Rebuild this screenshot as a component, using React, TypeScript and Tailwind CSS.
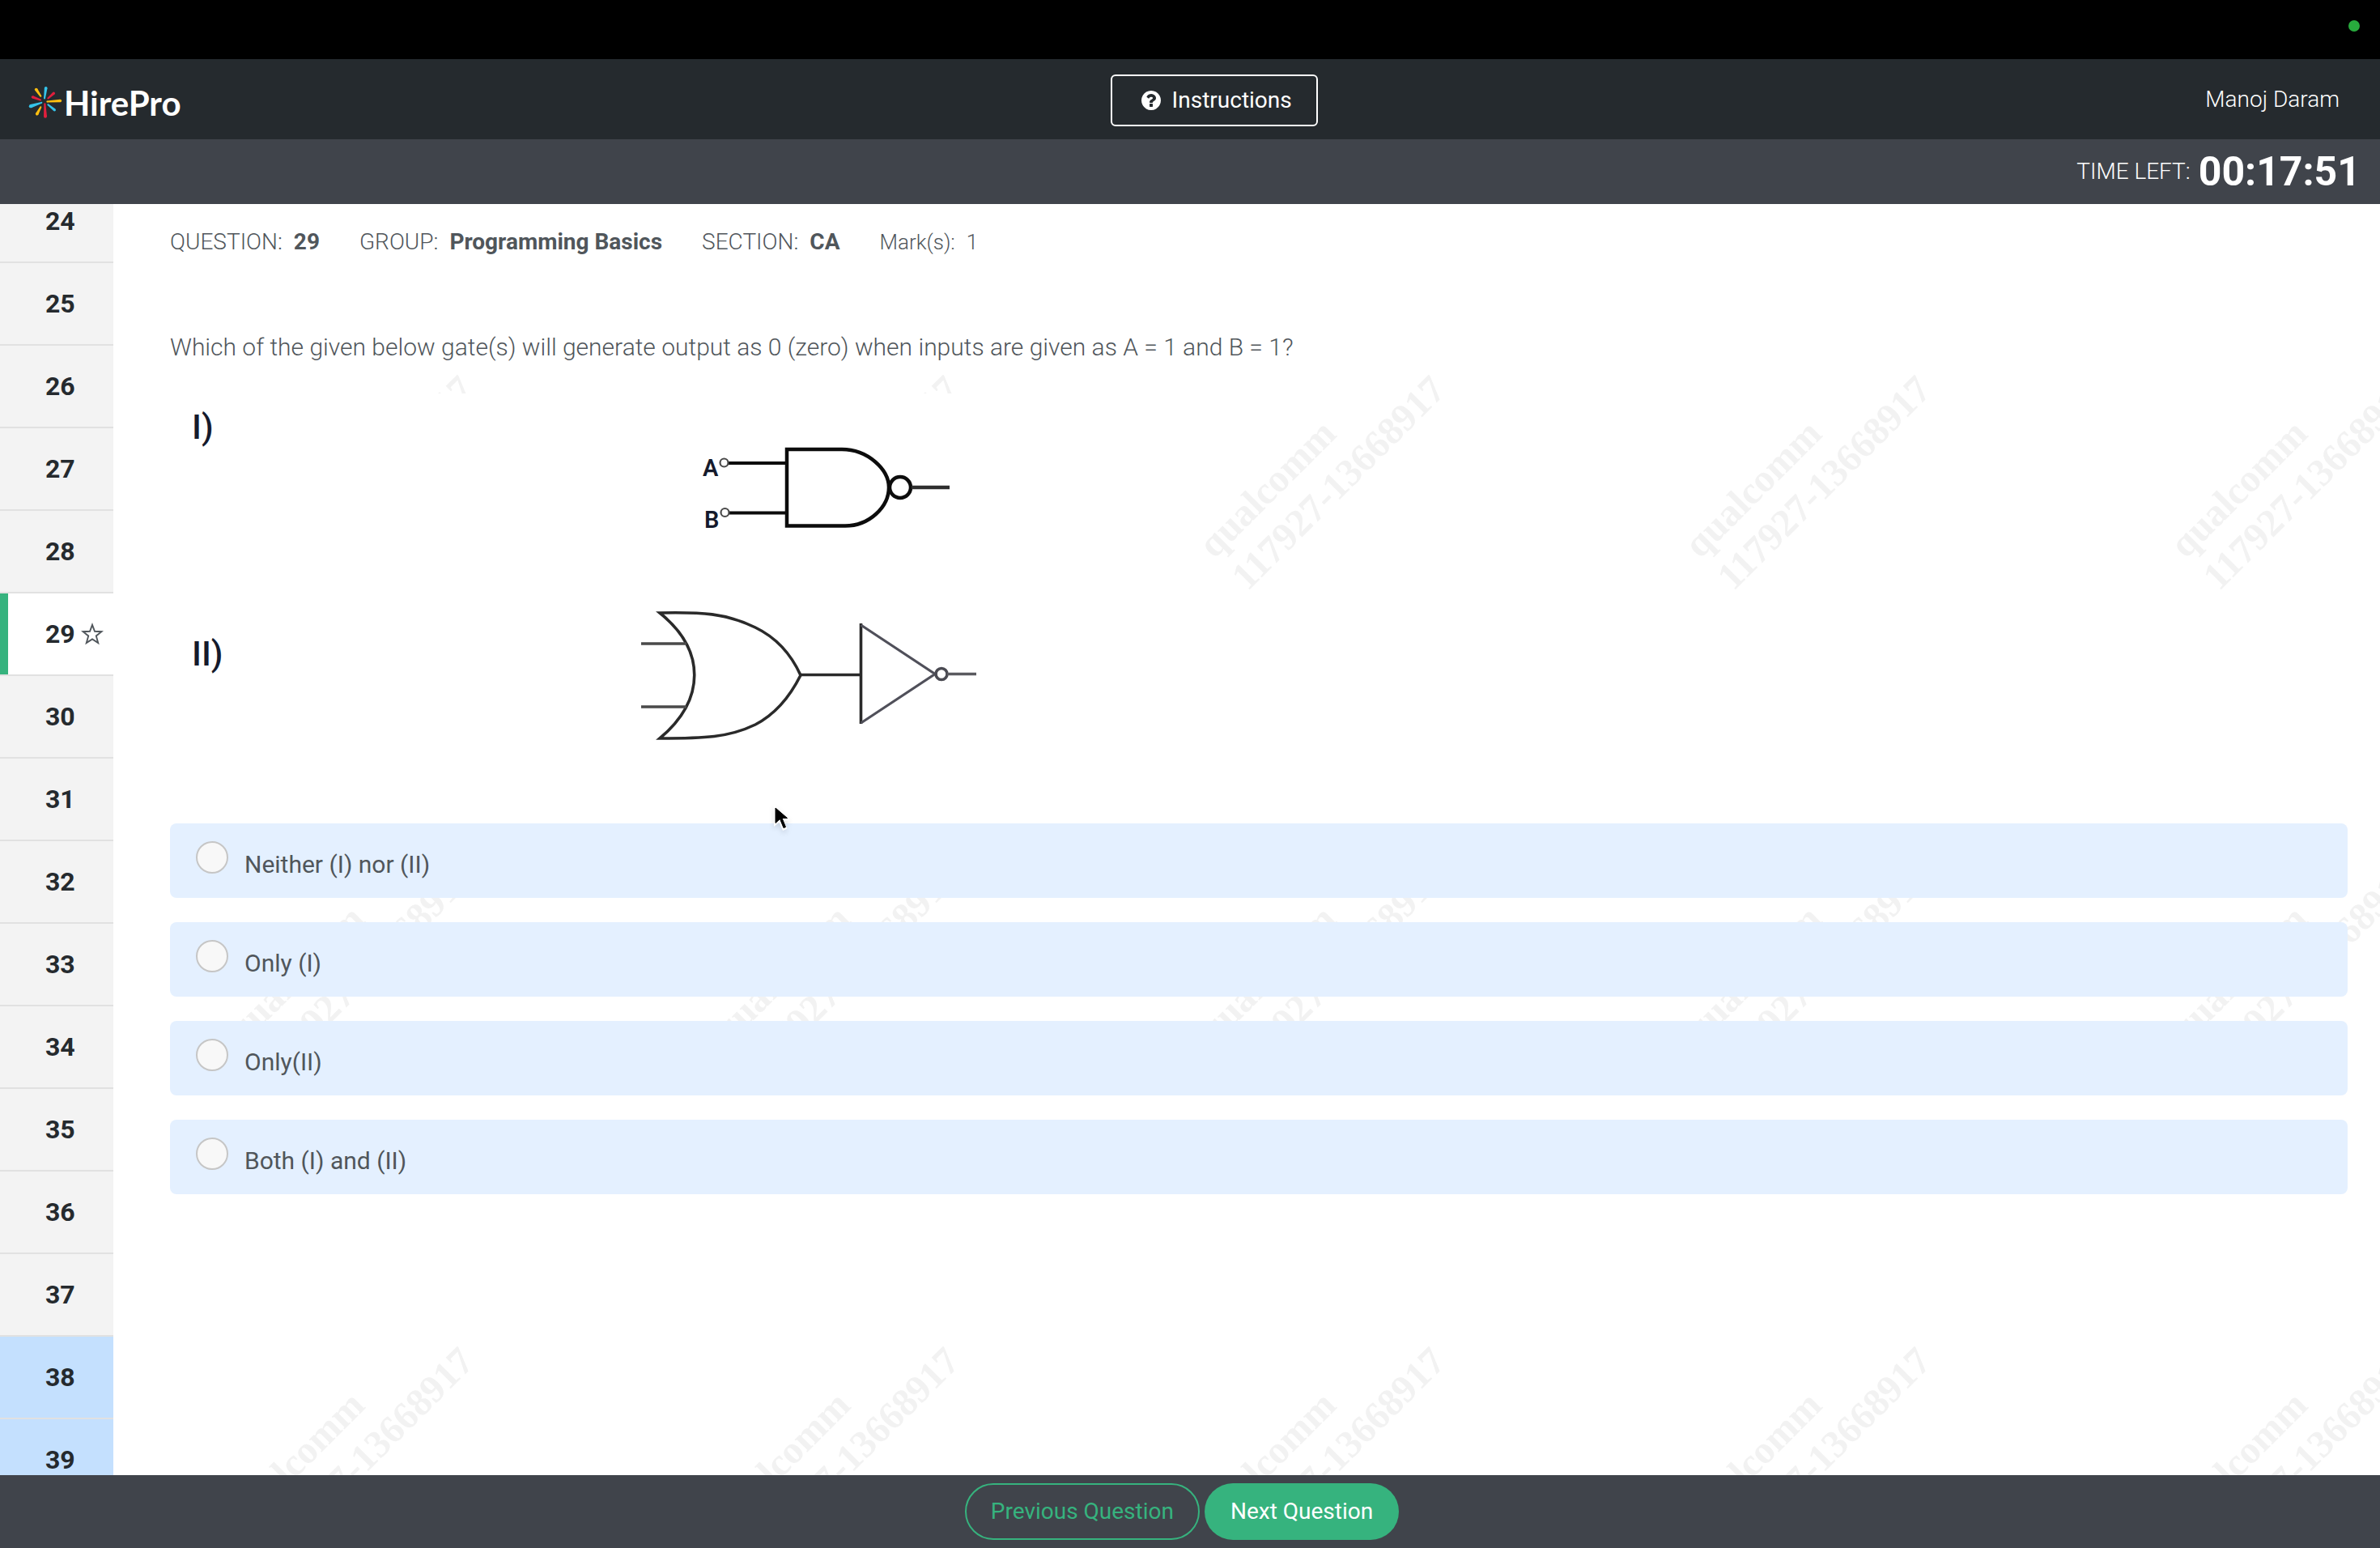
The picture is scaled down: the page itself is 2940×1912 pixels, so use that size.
import React from "react";

type QuestionState = "idle" | "active" | "unseen";

const questions: { n: number; state: QuestionState }[] = Array.from({ length: 16 }, (_, i) => {
  const n = 24 + i;
  return { n, state: n === 29 ? "active" : n >= 38 ? "unseen" : "idle" };
});

const options = ["Neither (I) nor (II)", "Only (I)", "Only(II)", "Both (I) and (II)"];

const rays: { from: [number, number]; to: [number, number]; color: string; r: number }[] = [
  { from: [165, 216], to: [170, 178], color: "#35c3ea", r: 5.5 },
  { from: [178, 216], to: [199, 197], color: "#e01f3d", r: 5 },
  { from: [175, 228], to: [223, 225], color: "#fdbe10", r: 5.5 },
  { from: [178, 239], to: [202, 259], color: "#35c3ea", r: 5 },
  { from: [166, 236], to: [168, 283], color: "#e01f3d", r: 6 },
  { from: [151, 248], to: [137, 274], color: "#fdbe10", r: 5.5 },
  { from: [154, 232], to: [114, 245], color: "#35c3ea", r: 6.5 },
  { from: [150, 222], to: [121, 211], color: "#e01f3d", r: 5 },
  { from: [151, 208], to: [134, 183], color: "#fdbe10", r: 5.5 },
];

function BurstMark() {
  return (
    <svg viewBox="105 170 126 122" className="h-[41px] w-[42px]" aria-hidden="true">
      {rays.map(({ from, to, color, r }, i) => {
        const dx = to[0] - from[0];
        const dy = to[1] - from[1];
        const len = Math.hypot(dx, dy);
        const nx = -dy / len;
        const ny = dx / len;
        const points = [
          [from[0] + nx * 3, from[1] + ny * 3],
          [to[0] + nx * r, to[1] + ny * r],
          [to[0] - nx * r, to[1] - ny * r],
          [from[0] - nx * 3, from[1] - ny * 3],
        ];
        return (
          <g key={i} fill={color}>
            <polygon points={points.map((p) => p.join(",")).join(" ")} />
            <circle cx={to[0]} cy={to[1]} r={r} />
            <circle cx={from[0]} cy={from[1]} r={3} />
          </g>
        );
      })}
    </svg>
  );
}

function HelpIcon() {
  return (
    <svg viewBox="128 128 1536 1536" className="size-6" fill="currentColor" aria-hidden="true">
      <path d="M1024 1376v-192q0-14-9-23t-23-9h-192q-14 0-23 9t-9 23v192q0 14 9 23t23 9h192q14 0 23-9t9-23zm256-672q0-88-55.5-163t-138.5-116-170-41q-243 0-371 213-15 24 8 42l132 100q7 6 19 6 16 0 25-12 53-68 86-92 34-24 86-24 48 0 85.5 26t37.5 59q0 38-20 61t-68 45q-63 28-115.5 86.5t-52.5 125.5v36q0 14 9 23t23 9h192q14 0 23-9t9-23q0-19 21.5-49.5t54.5-49.5q32-18 49-28.5t46-35 44.5-48 28-60.5 12.5-81zm384 192q0 209-103 385.5t-279.5 279.5-385.5 103-385.5-103-279.5-279.5-103-385.5 103-385.5 279.5-279.5 385.5-103 385.5 103 279.5 279.5 103 385.5z" />
    </svg>
  );
}

function StarIcon() {
  return (
    <svg viewBox="0 0 28 28" className="size-7" fill="none" stroke="#50565b" strokeWidth="1.9" aria-hidden="true">
      <path d="M14 2.8 17 10.800 25.400 11.200 18.800 16.400 21.200 25 14 20.400 6.800 25 9.200 16.400 2.600 11.200 11 10.800Z" />
    </svg>
  );
}

function Watermark() {
  return (
    <svg className="pointer-events-none absolute inset-0 size-full" aria-hidden="true">
      <defs>
        <pattern id="watermark" x="460" y="48" width="600" height="600" patternUnits="userSpaceOnUse">
          <g fill="#f2f2f2" fontFamily="'Liberation Serif', serif" fontWeight="700" fontSize="48">
            <text transform="translate(300 391) rotate(-45)">qualcomm</text>
            <text transform="translate(341 431) rotate(-45)">117927-13668917</text>
          </g>
        </pattern>
      </defs>
      <rect width="100%" height="100%" fill="url(#watermark)" />
    </svg>
  );
}

function GateFigure() {
  return (
    <svg
      viewBox="210 486 1060 454"
      className="h-[454px] w-[1060px] bg-white"
      role="img"
      aria-label="Two logic gate circuits, numbered I and II"
    >
      <g fill="#151a2c" fontFamily="Roboto, sans-serif">
        <text x="237" y="542" fontSize="42" fontWeight="500">I)</text>
        <text x="237" y="822" fontSize="42" fontWeight="500">II)</text>
        <text x="868" y="588" fontSize="29" fontWeight="600">A</text>
        <text x="870" y="652" fontSize="29" fontWeight="600">B</text>
      </g>
      <g fill="none" stroke="#0c0c0c" strokeWidth="4.5">
        <path d="M972 555H1040C1072 555 1098 580 1098 602C1098 626 1074 649.500 1044 649.500H972Z" />
        <path d="M900 572H972M901 633.500H972" strokeWidth="4" />
        <circle cx="1112" cy="602" r="13" />
        <path d="M1126 602H1173" stroke="#2e2e2e" />
        <g stroke="#4a4a4a" strokeWidth="2.200">
          <circle cx="894.500" cy="571.500" r="5" />
          <circle cx="895.500" cy="633" r="5" />
        </g>
      </g>
      <g fill="none" stroke="#2a2a2a" strokeWidth="3.600" strokeLinejoin="miter">
        <path d="M815 757C867 756 896 757 933 775C962 789 979 812 989 834C976 860 958 882 933 895C900 911 870 912 815 912C872 864 872 803 815 757Z" />
        <path d="M792 795H848M792 873H848" stroke="#4a4a4a" />
        <path d="M989 833.500H1063" />
        <path d="M1063.500 770V894" />
        <path d="M1063.500 772 1155 832.500 1063.500 893" stroke="#50505a" strokeWidth="3.200" />
        <circle cx="1163" cy="832.500" r="7" stroke="#4a4a52" />
        <path d="M1170 832.500H1206" stroke="#5a5a5f" />
      </g>
    </svg>
  );
}

function Pointer() {
  return (
    <svg
      viewBox="0 0 26 38"
      className="pointer-events-none absolute left-[813px] top-[740px] h-[38px] w-[26px] drop-shadow-md"
      aria-hidden="true"
    >
      <path d="M3 2V29L9.500 23.500 14 34 19.500 31.500 15 21.500H23Z" fill="#fff" />
      <path d="M5 6V24.500L10.500 19.500 15 30.500 17.500 29.500 13 18.500H19.500Z" fill="#000" stroke="#000" strokeWidth="1" />
    </svg>
  );
}

export default function App() {
  return (
    <div className="flex h-screen flex-col overflow-hidden bg-white font-['Roboto',sans-serif] text-[28px] text-[#50565b]">
      <div className="flex h-[73px] shrink-0 items-start justify-end bg-black pr-[25px] pt-[25px]">
        <span className="size-[14px] rounded-full bg-[#28ab3d]" />
      </div>

      <header className="flex h-[99px] shrink-0 items-center justify-between bg-[#252a2e] pl-[35px] pr-[50px] text-white">
        <a href="#home" className="flex w-[240px] items-center gap-[2px] pt-2" aria-label="HirePro">
          <BurstMark />
          <span className="font-['Lato',sans-serif] text-[42px] font-bold leading-[52px]">HirePro</span>
        </a>
        <button
          type="button"
          className="mt-[3px] flex h-16 items-center gap-[14px] rounded-md border-2 border-white pl-9 pr-[30px]"
        >
          <HelpIcon />
          Instructions
        </button>
        <span className="font-light">Manoj Daram</span>
      </header>

      <div className="flex h-20 shrink-0 items-center justify-end gap-[10px] bg-[#40444b] pr-6 text-white">
        <span className="font-light">TIME LEFT:</span>
        <span className="text-[50px] font-bold leading-[60px]">00:17:51</span>
      </div>

      <div className="flex min-h-0 flex-1">
        <nav className="w-[140px] shrink-0 overflow-hidden" aria-label="Questions">
          <ul className="-mt-[29px]">
            {questions.map(({ n, state }) => (
              <li key={n} className="border-b-2 border-[#e1e1e1]">
                <button
                  type="button"
                  className={
                    "flex h-[100px] w-full items-center gap-[7px] text-[32px] font-bold text-[#252a2e] " +
                    (state === "active"
                      ? "border-l-10 border-[#36b37e] bg-white pl-[46px]"
                      : state === "unseen"
                        ? "bg-[#c4e0fe] pl-14"
                        : "bg-[#f3f3f3] pl-14")
                  }
                >
                  {n}
                  {state === "active" && <StarIcon />}
                </button>
              </li>
            ))}
          </ul>
        </nav>

        <main className="relative min-w-0 flex-1 overflow-hidden">
          <Watermark />
          <div className="relative pl-[70px] pr-10 pt-[27px]">
            <div className="flex items-baseline gap-[49px] font-light leading-10">
              <p className="flex gap-[14px]">
                QUESTION: <b className="font-bold">29</b>
              </p>
              <p className="flex gap-[14px]">
                GROUP: <b className="font-bold">Programming Basics</b>
              </p>
              <p className="flex gap-[14px]">
                SECTION: <b className="font-bold">CA</b>
              </p>
              <p className="flex gap-[14px] text-[26px]">
                Mark(s): <span>1</span>
              </p>
            </div>

            <h1 className="mt-[88px] text-[30px] font-light leading-[44px]">
              Which of the given below gate(s) will generate output as 0 (zero) when inputs are given as A = 1 and B = 1?
            </h1>
            <div className="mt-[35px]">
              <GateFigure />
            </div>

            <fieldset className="mt-[77px] flex flex-col gap-[30px]">
              <legend className="sr-only">Answer</legend>
              {options.map((option) => (
                <label
                  key={option}
                  className="flex items-start gap-5 rounded-lg bg-[#e4f0ff] pb-3 pl-8 pt-[22px] text-[30px] leading-[58px]"
                >
                  <input
                    type="radio"
                    name="answer"
                    className="size-10 appearance-none rounded-full border-2 border-[#c6c6c6] bg-[#f8f8f8]"
                  />
                  {option}
                </label>
              ))}
            </fieldset>
          </div>
          <Pointer />
        </main>
      </div>

      <footer className="flex h-[90px] shrink-0 items-center justify-center gap-[6px] bg-[#40444b] pr-5">
        <button
          type="button"
          className="h-[70px] rounded-full border-2 border-[#36b37e] px-[30px] text-[#36b37e]"
        >
          Previous Question
        </button>
        <button type="button" className="h-[70px] rounded-full bg-[#36b37e] px-8 text-white">
          Next Question
        </button>
      </footer>
    </div>
  );
}
